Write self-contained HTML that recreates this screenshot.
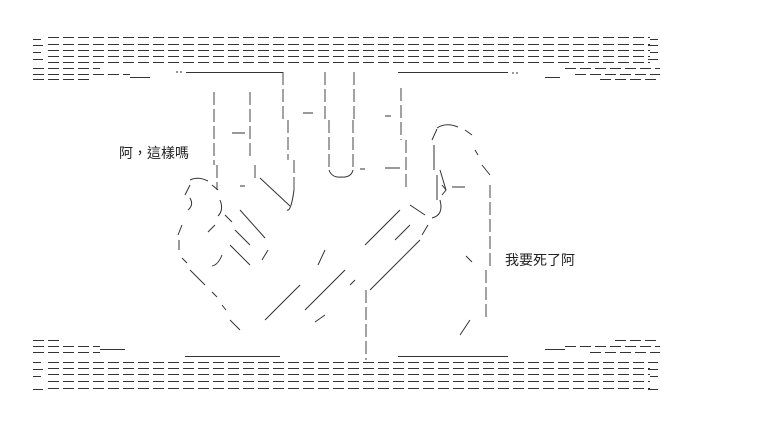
<!DOCTYPE html>
<html><head><meta charset="utf-8"><style>
html,body{margin:0;padding:0;background:#fff;width:760px;height:424px;overflow:hidden}
svg{position:absolute;left:0;top:0}
.t{position:absolute;font-family:"Liberation Sans","Noto Sans CJK TC",sans-serif;font-size:14px;color:#222;white-space:nowrap}
</style></head><body>
<svg width="760" height="424" viewBox="0 0 760 424" fill="none" stroke="#333" stroke-width="1">
<g stroke-dasharray="11 4">
<line x1="48" y1="37.5" x2="650" y2="37.5"/>
<line x1="48" y1="44.5" x2="650" y2="44.5"/>
<line x1="48" y1="50.5" x2="650" y2="50.5"/>
<line x1="48" y1="56.5" x2="650" y2="56.5"/>
<line x1="48" y1="62.5" x2="650" y2="62.5"/>
<line x1="33" y1="68.5" x2="100" y2="68.5"/>
<line x1="33" y1="74.5" x2="130" y2="74.5"/>
<line x1="33" y1="79.5" x2="90" y2="79.5"/>
<line x1="565" y1="68.5" x2="660" y2="68.5"/>
<line x1="575" y1="74.5" x2="660" y2="74.5"/>
<line x1="600" y1="79.5" x2="660" y2="79.5"/>
</g>
<path d="M33 39.5h8 M33 52.5h8 M33 45.5h10 M33 59.5h10 M650 39.5h8 M650 52.5h8 M648 45.5h10 M648 59.5h10"/>
<line x1="545" y1="77.5" x2="560" y2="77.5"/>
<line x1="130" y1="77.5" x2="150" y2="77.5"/>
<line x1="186" y1="72.5" x2="283" y2="72.5"/>
<line x1="398" y1="72.5" x2="508" y2="72.5"/>
<g stroke-dasharray="11 4">
<line x1="33" y1="340.5" x2="60" y2="340.5"/>
<line x1="33" y1="346.5" x2="100" y2="346.5"/>
<line x1="33" y1="352.5" x2="100" y2="352.5"/>
<line x1="565" y1="346.5" x2="660" y2="346.5"/>
<line x1="615" y1="340.5" x2="660" y2="340.5"/>
<line x1="590" y1="352.5" x2="660" y2="352.5"/>
<line x1="48" y1="362.5" x2="650" y2="362.5"/>
<line x1="48" y1="368.5" x2="650" y2="368.5"/>
<line x1="48" y1="374.5" x2="650" y2="374.5"/>
<line x1="48" y1="381.5" x2="650" y2="381.5"/>
<line x1="48" y1="388.5" x2="650" y2="388.5"/>
</g>
<path d="M33 362.5h8 M33 376.5h8 M33 369.5h10 M33 389.5h10 M650 362.5h8 M650 376.5h8 M648 369.5h10 M648 389.5h10"/>
<line x1="100" y1="349.5" x2="125" y2="349.5"/>
<line x1="545" y1="349.5" x2="565" y2="349.5"/>
<line x1="185" y1="356.5" x2="280" y2="356.5"/>
<line x1="398" y1="356.5" x2="508" y2="356.5"/>
<g stroke="#444" stroke-dasharray="13 4">
<path d="M214 92 V165 M217 165 V190"/>
<path d="M250 92 V160 M255 165 V180"/>
<path d="M283 72 V120 M288 120 V160 M294 160 V190"/>
<path d="M325 72 V120 M329 120 V170"/>
<path d="M354 72 V120 M353 120 V170"/>
<path d="M401 88 V140 M406 140 V190"/>
<path d="M366 290 V360"/>
<path d="M490 185 V270 M486 270 V320"/>
</g>
<path d="M329 170 Q332 178 341 177 Q351 178 353 170"/>
<path d="M294 190 Q291 212 287 210"/>
<path d="M303 113 H313 M232 133 H245 M385 116 H391 M360 169 H365 M385 168 H400 M240 186 H245 M452 187 H465"/>
<path d="M260 178 L290 206"/>
<path d="M440 170 L446 190"/>
<path d="M437 128 Q446 122 458 127 M432 140 L437 129 M465 130 L472 135 M475 150 L478 155 M482 165 L490 175"/>
<path d="M434 145 V170 M437 175 V200 M442 185 L446 190 L442 195"/>
<path d="M440 200 Q444 215 432 218"/>
<path d="M410 205 L425 215"/>
<path d="M190 180 Q198 176 208 181 M185 195 L190 185 M212 185 L218 190"/>
<path d="M190 198 Q194 205 188 210 M220 200 Q224 210 218 216"/>
<path d="M182 225 L178 235 M179 240 V250 M182 258 L187 263 M190 270 L205 285 M212 292 L217 297 M222 305 L226 310 M230 320 L240 330"/>
<path d="M225 215 L232 222 M235 230 L250 245 M215 225 L208 232 M230 245 L250 265 M240 210 L265 238 M262 260 L268 250"/>
<path d="M222 255 Q218 265 212 266"/>
<path d="M325 250 L318 265 M300 285 L265 320 M345 270 L305 310 M325 315 L315 322 M355 280 L350 285"/>
<path d="M365 245 L400 210 M420 240 L370 290 M422 235 L428 225 M395 240 L410 225"/>
<path d="M466 256 L472 262 M470 320 L460 335"/>
<path d="M176 72 h2 M180 72 h2 M512 73 h2 M516 73 h2"/>
</svg>
<div class="t" style="left:119px;top:143px">阿，這樣嗎</div>
<div class="t" style="left:505px;top:250px">我要死了阿</div>
</body></html>
